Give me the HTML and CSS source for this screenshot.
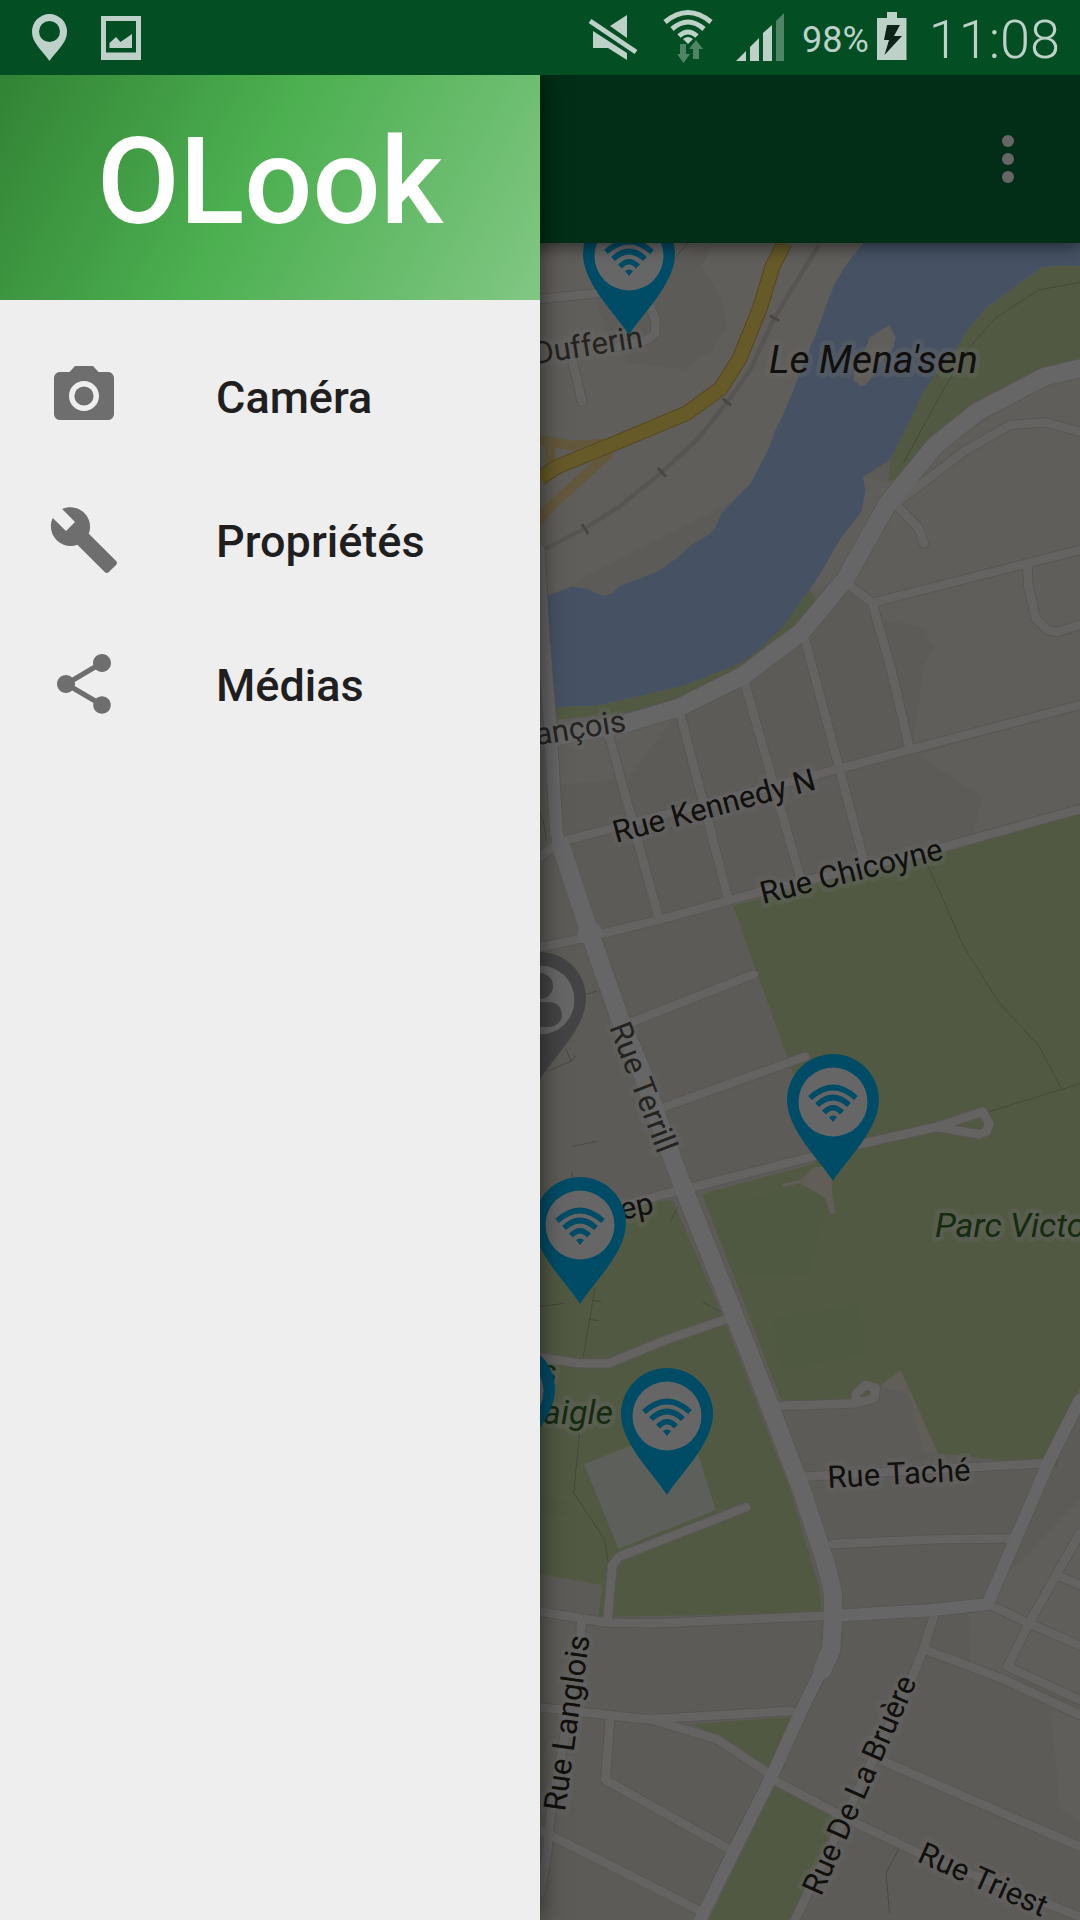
FILE: index.html
```html
<!DOCTYPE html>
<html lang="fr">
<head>
<meta charset="utf-8">
<meta name="viewport" content="width=device-width, initial-scale=1">
<title>OLook</title>
<link rel="stylesheet" href="styles.css">
</head>
<body>
<header class="status">
  <div class="status-group">
    <svg class="glyph" width="40" height="75" viewBox="30 0 40 75" aria-hidden="true"><path fill-rule="evenodd" d="M49.500 14A17.500 17.500 0 0 0 32 32C32 43 42 50 49.500 61C57 50 67 43 67 32A17.500 17.500 0 0 0 49.500 14ZM49.500 21A10.500 10.500 0 1 1 49.500 42A10.500 10.500 0 1 1 49.500 21Z"/></svg>
    <svg class="glyph" width="40" height="75" viewBox="101 0 40 75" aria-hidden="true"><path fill-rule="evenodd" d="M101 16H141V60H101ZM106 21V52.500H136V21Z"/><path d="M109.500 48V43L116 37L120.500 42L132 34V48Z"/></svg>
  </div>
  <div class="status-group status-right">
    <svg class="glyph" width="56" height="75" viewBox="590 0 56 75" aria-hidden="true"><path d="M629 15V38L612 26ZM595 31L629 53V60L610 48H595Z"/><path d="M592 21L638 52" stroke="#bdd1c8" stroke-width="5"/></svg>
    <svg class="glyph" width="58" height="75" viewBox="662 0 58 75" aria-hidden="true"><g fill="none" stroke="#bdd1c8" stroke-width="5"><path d="M667 22Q690 3 713 22"/><path d="M674 29Q690 15 706 29"/><path d="M681 36Q690 28 699 36"/></g><path d="M690 44L685 39Q690 35 695 39Z"/><path class="faint" d="M682 44H688V54H692L685.500 63L679 54H682ZM695 59V49H691L698 40L705 49H701V59Z"/></svg>
    <svg class="glyph" width="52" height="75" viewBox="736 0 52 75" aria-hidden="true"><path d="M738 61L748 51V61ZM752 61V47L761 38V61ZM765 61V33L774 25V61Z"/><path class="faint" d="M778 61V21L786 13V61Z"/></svg>
    <div class="power">
      <span class="charge">98%</span>
      <svg class="glyph" width="30" height="75" viewBox="879 0 30 75" aria-hidden="true"><path d="M889 12H899V18H908.500V60H879V18H889Z"/><path fill="#0f2218" d="M889 25H902L896 36H904L886.500 55L891 40H886Z"/></svg>
    </div>
    <time class="clock">11:08</time>
  </div>
</header>

<main class="screen">
  <div class="toolbar">
    <button class="more" type="button" aria-label="Plus d'options"><span class="dot"></span><span class="dot"></span><span class="dot"></span></button>
  </div>
  <svg class="map" viewBox="0 243 1080 1677" preserveAspectRatio="xMaxYMin slice" role="img" aria-label="Carte">
    <defs>
      <g id="wifi-pin">
        <path fill="#00beff" d="M0 0C-13 -21 -46 -51 -46 -81A46 46 0 0 1 46 -81C46 -51 13 -21 0 0Z"/>
        <circle cy="-79" r="34.500" fill="#fff"/>
        <g fill="none" stroke="#00beff" stroke-width="5.500">
          <path d="M-23 -83Q0 -104 23 -83"/><path d="M-16 -76Q0 -91 16 -76"/><path d="M-9 -68.500Q0 -78 9 -68.500"/>
        </g>
        <path fill="#00beff" d="M-4 -64Q0 -67 4 -64L0 -59Z"/>
      </g>
    </defs>
    <rect y="243" width="1080" height="1677" fill="#e6e3d9"/>
    <g transform="translate(540 0) scale(.34437 .33333)">
      <g fill="#f0ece2">
        <path d="M0 729H940L600 1480L20 1790H0Z"/>
        <path d="M1012 1450L1568 1080V2110L1085 2230L1115 2000L1145 1940L1110 1880L990 1860L900 1740L780 1770L945 1480L938 1430Z"/>
        <path d="M1100 2265L1568 2115V2420L1260 2500L1285 2390Z"/>
        <path d="M50 2230L390 2150L255 2335L60 2355ZM1245 4840L1568 4500V5100L1250 4985ZM1485 5130L1568 5160V5460L1510 5425Z"/>
      </g>
      <path fill="#e6e3d9" d="M500 729L470 800L530 900L545 980L500 1050L420 1108L260 1090L200 1010L160 900L395 770Z"/>
      <g fill="#cbdfa5">
        <path d="M1568 798L1500 797L1455 803L1300 920L1245 985L1205 1050L1150 1120L1110 1180L1050 1310L1018 1378L1012 1450L1268 1237L1568 1100Z"/>
        <path d="M42 2118L300 2080L585 1980L705 1875L782 1770L800 1795L760 1895L405 2122L42 2160Z"/>
        <path d="M560 2718L1540 2445L1568 2438V4160L1500 4400L1155 4360L1047 4110L985 4160L940 4200H700L600 3930L470 3582L800 3490L735 3220Z"/>
        <path d="M0 3650L385 3600L540 3970L730 4480L810 4760L820 4840L170 4850L180 4755L0 4722Z"/>
        <path d="M438 5173L735 5150L662 5308L520 5210ZM680 5358L865 5440L838 5520L750 5720L720 5760H490Z"/>
      </g>
      <path fill="#c6dca0" d="M515 3650L530 3610L820 3555L825 3640L785 3825L590 3832L560 3800L515 3690ZM678 3955L930 3912L948 4065L695 4110ZM0 4490L85 4500L78 4548L0 4540Z"/>
      <path fill="#f2e9da" d="M985 4160L1047 4110L1155 4360L1112 4350L1070 4178ZM800 3500H850L848 3580L858 3635L845 3643L828 3595L755 3550L705 3560V3552L755 3540Z"/>
      <path fill="#e8f1e2" d="M128 4392L430 4270L510 4530L228 4646Z"/>
      <path fill="#afcdfa" d="M940 729L905 772L878 812L856 850L840 892L800 1005L775 1065L745 1145L708 1240L682 1295L665 1345L612 1450L528 1538L512 1575L495 1600L440 1635L400 1672L345 1712L295 1733L232 1757L210 1780L190 1788L165 1782L138 1766L92 1760L15 1790L42 2128L80 2118L165 2117L300 2085L420 2056L585 1988L640 1945L705 1880L782 1770L815 1720L870 1620L935 1532L945 1470L938 1430L1018 1378L1050 1310L1085 1240L1110 1180L1150 1120L1205 1050L1245 985L1300 920L1455 803L1500 797L1568 798V729Z"/>
      <path fill="#f0ece2" d="M1015 975L958 1012L940 1060L915 1110L910 1140L932 1158L945 1155L965 1130L985 1090L1025 1045L1033 1015Z"/>

      <g class="trail">
        <path d="M1568 847L1447 870L1322 955L1240 1050L1165 1180L1055 1390M1125 2595L1180 2720L1230 2840L1335 3010L1450 3140L1515 3268L1568 3250M1515 3268L1305 3335"/>
        <path d="M115 4300L98 4480L188 4620L198 4690M160 3860L125 4075M155 3900L180 3907M142 3958L170 3962M0 3920L70 3910M473 3908L525 3935M378 3668L400 3620M1045 5540L1005 5620L1015 5740"/>
        <path d="M135 2983L165 2973M20 3214L90 3184L75 3145M90 3184L105 3166M93 3440L163 3424M92 3514L95 3540M0 2440Q15 2470 18 2525M395 770L430 729"/>
      </g>
      <path class="rail" d="M810 735L680 955L610 1110L545 1205L455 1320L350 1420L230 1520L130 1585L0 1655"/>
      <path class="tie" d="M667 947L695 963M530 1196L555 1216M342 1404L366 1430M122 1573L140 1602"/>

      <g class="case">
        <path id="minor" d="M0 2570L60 2525L875 2305L1070 2250L1568 2115M0 2842L145 2810L345 2760L640 2675L1160 2545L1540 2435L1568 2428M200 2205L345 2755M408 2145L545 2690M595 2050L755 2630M770 1920L940 2580M900 1758L965 1808L1020 2010L1072 2240M965 1808L1568 1650M1415 1700L1418 1760L1440 1855L1475 1890L1500 1897L1568 1875M1040 1505L1230 1355L1365 1275L1465 1267L1568 1295M1030 1510L1100 1585L1115 1630M0 897L160 880L300 865L335 960V1000L310 1020L230 1040M95 1085L122 1205M270 3065L620 2923M365 3320L770 3170M0 3690L335 3590L450 3560L790 3470L940 3430L1155 3380L1285 3335L1305 3372L1295 3395L1275 3403L1160 3382M0 4072L115 4090H200L365 4020L540 3958M690 4218L920 4210L970 4195L975 4165L945 4155L918 4180V4210M765 4430L1460 4390M850 4632L1140 4618L1360 4615M0 4835L190 4867L330 4870L820 4848M1300 4812L1420 4870L1568 4937M1568 4600L1420 4870L1358 5000L1568 5100M1510 4730L1568 4755M1145 4845L1115 4945L1070 5060L740 5760M1120 4950L1340 5035L1568 5145M1000 5285L1568 5540M670 5335L880 5450L1100 5560L1568 5750M0 5122L310 5158L730 5133M310 5155L515 5218L670 5325M203 5165L190 5340L545 5545M0 5490L460 5730M120 4870L115 4950L30 5450L20 5560L0 5680M197 4850L210 4695L230 4670L598 4522"/>
      </g>
      <path class="case wide" d="M1568 1105L1465 1130L1268 1237L1148 1336L1010 1510L887 1737L760 1895L590 2027L405 2122L250 2170L20 2215M60 2535L145 2800L240 3080L290 3200L340 3350L415 3560L500 3780L620 4090L760 4470L830 4690L850 4775L852 4850L845 4950L820 5010"/>
      <path class="case mid" d="M-5 1650L10 1920L30 2180L48 2500L65 2560M1568 4200L1480 4380L1300 4812L1140 4830L852 4848M845 4950L760 5130L670 5335L560 5560L465 5760"/>
      <use href="#minor" class="road"/>
      <path class="road wide" d="M1568 1105L1465 1130L1268 1237L1148 1336L1010 1510L887 1737L760 1895L590 2027L405 2122L250 2170L20 2215M60 2535L145 2800L240 3080L290 3200L340 3350L415 3560L500 3780L620 4090L760 4470L830 4690L850 4775L852 4850L845 4950L820 5010"/>
      <path class="road mid" d="M-5 1650L10 1920L30 2180L48 2500L65 2560M1568 4200L1480 4380L1300 4812L1140 4830L852 4848M845 4950L760 5130L670 5335L560 5560L465 5760"/>
      <circle cx="145" cy="2800" r="35" fill="#fff"/>
      <path class="ramp" d="M0 1320L95 1337L205 1330M205 1355L15 1535L-5 1570M30 1330V1400"/>
      <path class="highway-case" d="M710 729L675 800L640 920L580 1075L525 1165L425 1240L205 1335L50 1400L0 1435"/>
      <path class="highway" d="M710 729L675 800L640 920L580 1075L525 1165L425 1240L205 1335L50 1400L0 1435"/>
    </g>

    <g class="label">
      <text class="soft end" transform="translate(644 347) rotate(-9)">Rue Dufferin</text>
      <text class="soft end" transform="translate(627 731) rotate(-9)">Rue Saint François</text>
      <text transform="translate(616 843) rotate(-15)">Rue Kennedy N</text>
      <text transform="translate(763 904) rotate(-14)">Rue Chicoyne</text>
      <text class="soft" transform="translate(609 1027) rotate(69)">Rue Terrill</text>
      <text class="end" transform="translate(655 1213) rotate(-12)">ep</text>
      <text transform="translate(828 1488) rotate(-3)">Rue Taché</text>
      <text transform="translate(565 1812) rotate(-82)">Rue Langlois</text>
      <text transform="translate(821 1897) rotate(-66)">Rue De La Bruère</text>
      <text transform="translate(916 1861) rotate(24)">Rue Triest</text>
      <text class="place" x="769" y="373">Le Mena'sen</text>
      <text class="park" x="935" y="1237">Parc Victoria</text>
      <text class="park end" x="557" y="1383">s</text>
      <text class="park end" x="613" y="1424">aigle</text>
    </g>

    <use href="#wifi-pin" x="629" y="335"/>
    <g transform="translate(540 1079)">
      <path fill="#aaa" d="M0 0C-13 -21 -46 -51 -46 -81A46 46 0 0 1 46 -81C46 -51 13 -21 0 0Z"/>
      <circle cy="-79" r="34.500" fill="#fff"/>
      <circle cy="-93" r="13" fill="#aaa"/><path fill="#aaa" d="M-22 -62Q-22 -77 -8 -77H8Q22 -77 22 -62Q20 -54 10 -52H-10Q-20 -54 -22 -62Z"/>
    </g>
    <use href="#wifi-pin" x="833" y="1181"/>
    <use href="#wifi-pin" x="580" y="1304"/>
    <use href="#wifi-pin" x="509" y="1470"/>
    <use href="#wifi-pin" x="667" y="1495"/>
  </svg>
  <div class="scrim"></div>
  <aside class="drawer">
    <h1 class="brand">OLook</h1>
    <nav class="menu">
      <a class="item" href="#camera"><svg class="icon" viewBox="0 0 24 24" aria-hidden="true"><circle cx="12" cy="12" r="3.200"/><path d="M9 2L7.170 4H4c-1.100 0-2 .9-2 2v12c0 1.100.9 2 2 2h16c1.100 0 2-.9 2-2V6c0-1.100-.9-2-2-2h-3.170L15 2H9zm3 15c-2.760 0-5-2.240-5-5s2.240-5 5-5 5 2.240 5 5-2.240 5-5 5z"/></svg><span class="item-name">Caméra</span></a>
      <a class="item" href="#proprietes"><svg class="icon" viewBox="0 0 24 24" aria-hidden="true"><path d="M22.700 19l-9.100-9.100c.9-2.300.4-5-1.500-6.900-2-2-5-2.400-7.400-1.300L9 6 6 9 1.600 4.700C.4 7.100.9 10.100 2.900 12.100c1.900 1.900 4.600 2.400 6.900 1.500l9.100 9.100c.4.4 1 .4 1.400 0l2.300-2.300c.5-.4.5-1.100.1-1.400z"/></svg><span class="item-name">Propriétés</span></a>
      <a class="item" href="#medias"><svg class="icon" viewBox="0 0 24 24" aria-hidden="true"><path d="M18 16.080c-.76 0-1.440.3-1.960.77L8.910 12.700c.05-.23.09-.46.09-.7s-.04-.47-.09-.7l7.050-4.110c.54.5 1.250.81 2.040.81 1.660 0 3-1.340 3-3s-1.340-3-3-3-3 1.340-3 3c0 .24.040.47.090.7L8.040 9.810C7.500 9.310 6.790 9 6 9c-1.660 0-3 1.340-3 3s1.340 3 3 3c.79 0 1.500-.31 2.040-.81l7.120 4.160c-.05.21-.08.43-.08.65 0 1.610 1.310 2.920 2.920 2.920s2.920-1.310 2.920-2.920-1.310-2.920-2.920-2.920z"/></svg><span class="item-name">Médias</span></a>
    </nav>
  </aside>
</main>
</body>
</html>
```
FILE: styles.css
```css
* { box-sizing: border-box; }

body {
  margin: 0;
  min-height: 100vh;
  display: flex;
  flex-direction: column;
  font-family: Roboto, "Noto Sans", sans-serif;
}

/* Status bar */
.status {
  display: flex;
  justify-content: space-between;
  height: 75px;
  padding: 0 20px 0 30px;
  background: #034e23;
  color: #bdd1c8;
}
.status-group { display: flex; align-items: center; gap: 31px; }
.status-right { gap: 16px; }
.glyph { display: block; flex: none; fill: #bdd1c8; }
.faint { fill: #4f8465; }
.power { display: flex; align-items: center; gap: 8px; }
.charge { padding-top: 4px; font-size: 36px; line-height: 72px; }
.clock { padding: 4px 0 0 6px; font-size: 54px; font-weight: 300; line-height: 72px; }

/* Screen under the drawer */
.screen {
  position: relative;
  flex: 1;
  display: flex;
  flex-direction: column;
  overflow: hidden;
}
.toolbar {
  position: relative;
  display: flex;
  justify-content: flex-end;
  height: 168px;
  padding-right: 48px;
  background: #057037;
  box-shadow: 0 4px 16px rgba(0, 0, 0, .5);
}
.more {
  display: flex;
  flex-direction: column;
  align-items: center;
  justify-content: center;
  gap: 6px;
  width: 48px;
  padding: 0;
  border: 0;
  background: none;
}
.dot { width: 12px; height: 12px; border-radius: 50%; background: #fff; }
.map { display: block; flex: 1; width: 100%; min-height: 0; }
.scrim { position: absolute; inset: 0; background: rgba(0, 0, 0, .6); }

/* Map lines */
.trail { fill: none; stroke: #a59c8c; stroke-width: 2; }
.rail { fill: none; stroke: #d6d4cd; stroke-width: 13; }
.tie { stroke: #b4b2ae; stroke-width: 9; }
.case, .road { fill: none; stroke-linecap: round; stroke-linejoin: round; }
.case { stroke: #d8d5ce; stroke-width: 31; }
.road { stroke: #fbf8f6; stroke-width: 25; }
.case.wide { stroke-width: 58; }
.road.wide { stroke: #fff; stroke-width: 53; }
.case.mid { stroke-width: 41; }
.road.mid { stroke: #fff; stroke-width: 36; }
.ramp { fill: none; stroke: #f9db96; stroke-width: 30; }
.highway-case { fill: none; stroke: #d4b04c; stroke-width: 46; }
.highway { fill: none; stroke: #ffe168; stroke-width: 40; }

/* Map text */
.label {
  font-size: 31px;
  fill: #2b2820;
  stroke: rgba(255, 255, 255, .35);
  stroke-width: 9px;
  stroke-linejoin: round;
  paint-order: stroke;
}
.soft { fill: #5c5950; }
.end { text-anchor: end; }
.place { font-size: 39px; font-style: italic; }
.park { font-size: 34px; font-style: italic; fill: #376b26; }

/* Drawer */
.drawer {
  position: absolute;
  top: 0;
  bottom: 0;
  left: 0;
  width: 50%;
  background: #eee;
  box-shadow: 0 0 24px rgba(0, 0, 0, .6);
}
.brand {
  margin: 0;
  height: 225px;
  background: linear-gradient(119deg, #328335, #4caf50 46%, #81c784);
  color: #fff;
  font-size: 120px;
  font-weight: 500;
  line-height: 214px;
  text-align: center;
}
.menu { padding-top: 24px; }
.item {
  display: flex;
  align-items: center;
  gap: 96px;
  height: 144px;
  padding: 0 48px;
  color: #1f1f1f;
  font-size: 45px;
  font-weight: 500;
  text-decoration: none;
}
.item-name { padding-top: 2px; }
.icon { width: 72px; height: 72px; fill: #6e6e6e; }
```
